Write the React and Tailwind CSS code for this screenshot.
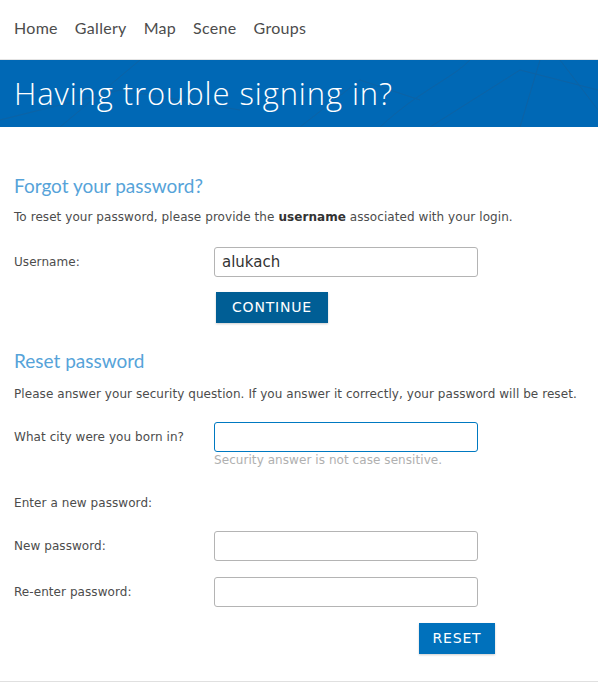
import React from 'react';

const navItems = ['Home', 'Gallery', 'Map', 'Scene', 'Groups'];

function Field({ label, value = '', focused = false, hint }) {
  return (
    <div className="flex flex-col">
      <div className="flex items-center h-[30px]">
        <label className="w-[200px] text-[12px] tracking-[0.065px] text-[#4c4c4c]">{label}</label>
        <input
          type="text"
          defaultValue={value}
          className={
            focused
              ? 'w-[264px] h-[30px] px-[7px] rounded-[3px] border border-[#0079c1] bg-white text-[15px] text-[#333] outline-none'
              : 'w-[264px] h-[30px] px-[7px] rounded-[3px] border border-[#b4b4b4] bg-white text-[15px] text-[#333] outline-none'
          }
        />
      </div>
      {hint && (
        <div className="ml-[200px] h-[16px] leading-[16px] text-[12px] tracking-[0.065px] text-[#b0b0b0]">{hint}</div>
      )}
    </div>
  );
}

export default function App() {
  return (
    <div className="w-[598px] h-[698px] bg-white overflow-hidden font-['DejaVu_Sans',sans-serif]">
      {/* top nav */}
      <nav className="h-[60px] border-b border-[#e4e4e4] flex items-center gap-[17px] px-[14px] pb-[4px] font-['Lato',sans-serif] text-[16px] text-[#4c4c4c]">
        {navItems.map((n) => (
          <a key={n} href="#" className="tracking-[0.3px]">{n}</a>
        ))}
      </nav>

      {/* banner */}
      <div className="relative h-[67px] bg-[#0068b5] flex items-center px-[14px] overflow-hidden">
        <svg className="absolute inset-0 w-full h-full" viewBox="0 0 598 67" preserveAspectRatio="none">
          <g stroke="#1a5e95" strokeWidth="1" fill="none" opacity="0.5">
            <path d="M0 60 L120 30 L240 50" />
            <path d="M60 67 L140 0" />
            <path d="M380 67 C420 30 450 20 470 0" />
            <path d="M430 67 L520 10 L598 30" />
            <path d="M520 67 L540 0" />
            <path d="M560 0 L598 50" />
            <path d="M300 67 L360 20 L420 40" />
          </g>
        </svg>
        <h1 className="relative font-['Open_Sans',sans-serif] font-light text-[31px] tracking-[0.9px] text-white">
          Having trouble signing in?
        </h1>
      </div>

      <main className="px-[14px] pt-[47px]">
        <h2 className="h-[24px] leading-[24px] font-['Lato',sans-serif] text-[19px] text-[#56a3d9]">
          Forgot your password?
        </h2>
        <p className="mt-[10px] leading-[18px] text-[12px] tracking-[0.065px] text-[#4c4c4c]">
          To reset your password, please provide the <b className="text-[#333]">username</b> associated with your login.
        </p>
        <div className="mt-[21px]">
          <Field label="Username:" value="alukach" />
        </div>
        <button className="mt-[15px] ml-[202px] w-[112px] h-[31px] bg-[#005e95] text-white text-[14px] tracking-[0.8px] shadow-[0_1px_2px_rgba(0,0,0,0.2)]">
          CONTINUE
        </button>

        <h2 className="mt-[26px] h-[24px] leading-[24px] font-['Lato',sans-serif] text-[19px] text-[#56a3d9]">
          Reset password
        </h2>
        <p className="mt-[12px] leading-[18px] text-[12px] tracking-[0.065px] text-[#4c4c4c]">
          Please answer your security question. If you answer it correctly, your password will be reset.
        </p>
        <div className="mt-[19px]">
          <Field label="What city were you born in?" focused hint="Security answer is not case sensitive." />
        </div>
        <p className="mt-[26px] leading-[18px] text-[12px] tracking-[0.065px] text-[#4c4c4c]">Enter a new password:</p>
        <div className="mt-[19px]">
          <Field label="New password:" />
        </div>
        <div className="mt-[16px]">
          <Field label="Re-enter password:" />
        </div>
        <button className="mt-[16px] ml-[405px] w-[76px] h-[31px] bg-[#0071bc] text-white text-[14px] tracking-[0.8px] shadow-[0_1px_2px_rgba(0,0,0,0.2)]">
          RESET
        </button>
      </main>
      <div className="mt-[27px] border-t border-[#e0e0e0]" />
    </div>
  );
}
